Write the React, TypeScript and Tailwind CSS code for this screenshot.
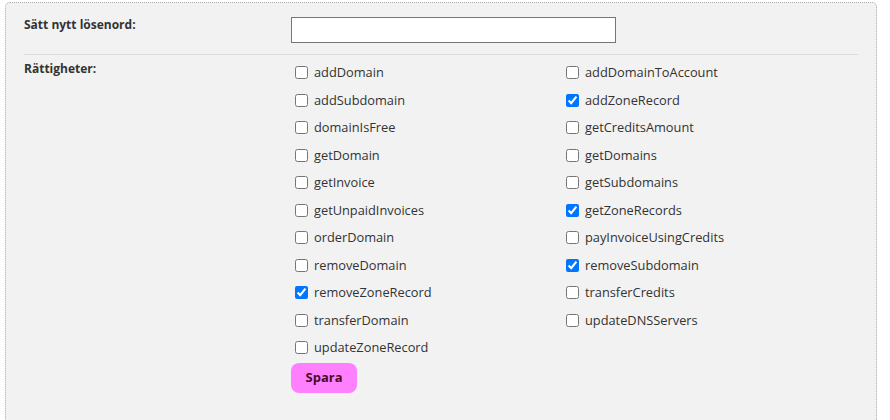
const LEFT = [
  ["addDomain", false],
  ["addSubdomain", false],
  ["domainIsFree", false],
  ["getDomain", false],
  ["getInvoice", false],
  ["getUnpaidInvoices", false],
  ["orderDomain", false],
  ["removeDomain", false],
  ["removeZoneRecord", true],
  ["transferDomain", false],
  ["updateZoneRecord", false],
] as const;

const RIGHT = [
  ["addDomainToAccount", false],
  ["addZoneRecord", true],
  ["getCreditsAmount", false],
  ["getDomains", false],
  ["getSubdomains", false],
  ["getZoneRecords", true],
  ["payInvoiceUsingCredits", false],
  ["removeSubdomain", true],
  ["transferCredits", false],
  ["updateDNSServers", false],
] as const;

function Perm({ name, checked }: { name: string; checked: boolean }) {
  return (
    <label className="flex h-[27.5px] items-center text-[12.8px] text-[#333]">
      <input
        type="checkbox"
        defaultChecked={checked}
        className="m-0 ml-[4px] mr-[6px] h-[13px] w-[13px]"
      />
      {name}
    </label>
  );
}

export default function App() {
  const rows: { name: string; checked: boolean }[] = [];
  for (let i = 0; i < LEFT.length; i++) {
    rows.push({ name: LEFT[i][0], checked: LEFT[i][1] });
    if (RIGHT[i]) rows.push({ name: RIGHT[i][0], checked: RIGHT[i][1] });
    else rows.push({ name: "", checked: false });
  }

  return (
    <div className="min-h-[420px] bg-white pl-[5px] pt-[2px] font-['Open_Sans',sans-serif]">
      <div className="h-[430px] w-[872px] rounded-t-[5px] border border-dotted border-[#aaa] bg-[#f2f2f2] px-[18px]">
        <div className="flex border-b border-[#dcdcdc] pb-[11px] pt-[14px]">
          <div className="w-[267px] text-[12px] leading-[16px] font-bold text-[#333]">Sätt nytt lösenord:</div>
          <input type="text" className="h-[26px] w-[325px] border border-[#767676] bg-white" />
        </div>
        <div className="flex pt-[4px]">
          <div className="w-[267px] pt-[2px] text-[12px] leading-[16px] font-bold text-[#333]">Rättigheter:</div>
          <div>
            <div className="grid grid-cols-[271px_271px]">
              {rows.map((r, i) =>
                r.name ? <Perm key={i} name={r.name} checked={r.checked} /> : <div key={i} />
              )}
            </div>
            <button className="mt-[1px] h-[30px] w-[66px] rounded-[8px] bg-[#ff80ff] text-[13px] font-bold text-[#4a0a2a]">
              Spara
            </button>
          </div>
        </div>
      </div>
    </div>
  );
}
